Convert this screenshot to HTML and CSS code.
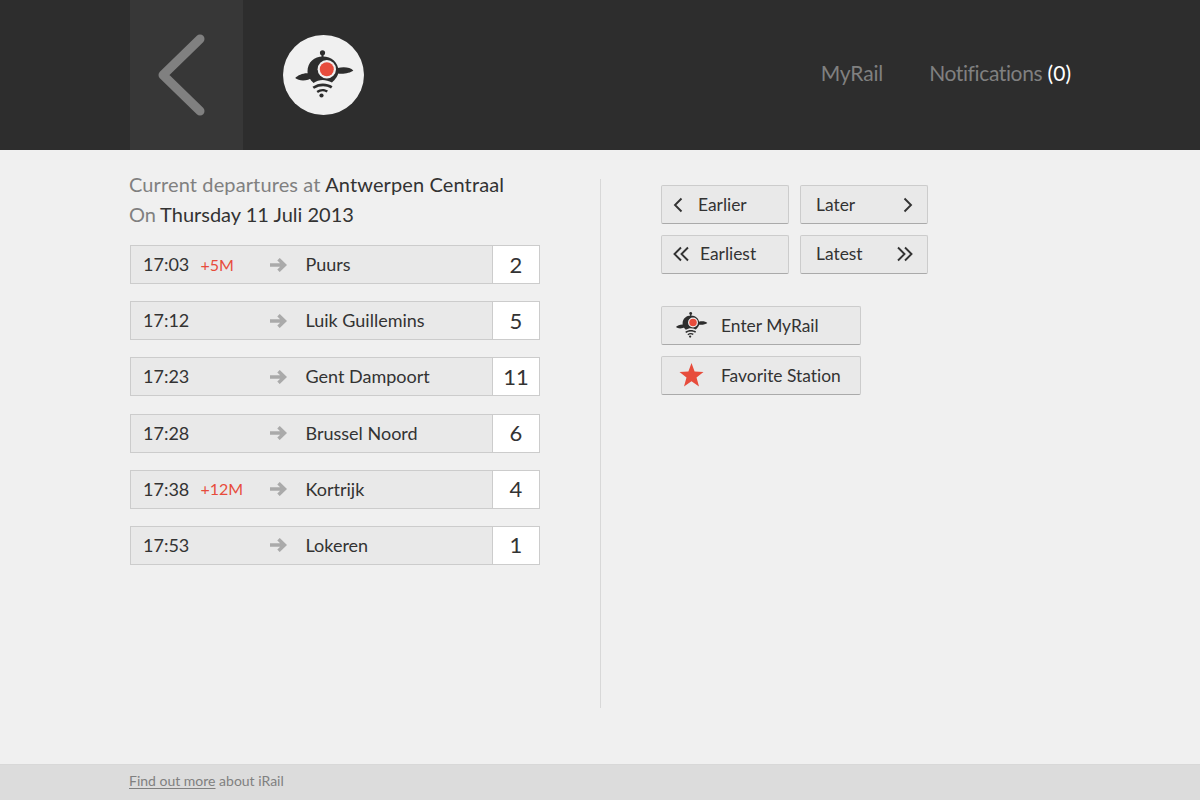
FILE: index.html
```html
<!DOCTYPE html>
<html lang="en">
<head>
    <meta charset="UTF-8">
    <title>iRail - Current departures</title>
    <link rel="stylesheet" href="styles.css">
</head>
<body>
    <svg class="defs" width="0" height="0">
        <symbol id="logo" viewBox="0 0 60 50">
            <g fill="#2d2d2d">
                <circle cx="28.500" cy="2.800" r="2.600"/>
                <rect x="27.500" y="4" width="2" height="5"/>
                <path d="M13.500 21.500C13.500 12 20.500 6.500 28.800 6.500C37.500 6.500 44.500 12.500 44.500 21C44.500 26 41 29.500 38 32.500C31.500 29 25 29 19.500 33C16.500 30 13.500 26.500 13.500 21.500z"/>
                <path d="M1.200 28c3-3 9-5.500 14-4.500l3 4c-4 3.500-13 4-17 .5z"/>
                <path d="M59.300 20.500c-3-3-9-4-15.500-2.500l-3 4.500c5 2.500 15 1 18.500-2z"/>
                <path d="M18.500 36.800c6-4.300 14-4.500 20-.5l-1.500 2.200c-5-3-11-3-17 .3z"/>
                <path d="M22.500 41c3.500-2.700 8-2.700 11.500-.5l-1.400 2c-3-1.600-5.800-1.600-8.700.4z"/>
                <circle cx="27.500" cy="45.500" r="2.100"/>
            </g>
            <circle cx="32.800" cy="19.300" r="9.200" fill="#f0f0f0"/>
            <circle cx="32.800" cy="19.300" r="7" fill="#e74c3c"/>
        </symbol>
    </svg>

    <header class="top">
        <div class="wrap top-inner">
            <a class="back" href="#">
                <svg width="48" height="82" viewBox="0 0 48 82"><path d="M43 5 L6 41 L43 77" fill="none" stroke="#808080" stroke-width="9" stroke-linecap="round" stroke-linejoin="round"/></svg>
            </a>
            <div class="badge">
                <svg width="60" height="50"><use href="#logo"/></svg>
            </div>
            <nav class="nav">
                <a class="myrail" href="#">MyRail</a>
                <a href="#"><span class="notif">Notifications</span> <span class="count">(0)</span></a>
            </nav>
        </div>
    </header>

    <main class="wrap content">
        <section class="left">
            <h1 class="title"><span class="line1">Current departures at <b>Antwerpen Centraal</b></span><br><span class="on">On </span><b>Thursday 11 Juli 2013</b></h1>
            <ul class="trains">
                <li class="train">
                    <div class="info"><span class="time">17:03</span><span class="delay">+5M</span>
                        <svg class="arrow" viewBox="0 0 17 14"><path d="M0 7h14M8.500 1.200 L14.500 7 L8.500 12.800" fill="none" stroke="#aaa" stroke-width="3.500"/></svg>
                        <span class="dest">Puurs</span></div>
                    <div class="platform">2</div>
                </li>
                <li class="train">
                    <div class="info"><span class="time">17:12</span><span class="delay"></span>
                        <svg class="arrow" viewBox="0 0 17 14"><path d="M0 7h14M8.500 1.200 L14.500 7 L8.500 12.800" fill="none" stroke="#aaa" stroke-width="3.500"/></svg>
                        <span class="dest">Luik Guillemins</span></div>
                    <div class="platform">5</div>
                </li>
                <li class="train">
                    <div class="info"><span class="time">17:23</span><span class="delay"></span>
                        <svg class="arrow" viewBox="0 0 17 14"><path d="M0 7h14M8.500 1.200 L14.500 7 L8.500 12.800" fill="none" stroke="#aaa" stroke-width="3.500"/></svg>
                        <span class="dest">Gent Dampoort</span></div>
                    <div class="platform">11</div>
                </li>
                <li class="train">
                    <div class="info"><span class="time">17:28</span><span class="delay"></span>
                        <svg class="arrow" viewBox="0 0 17 14"><path d="M0 7h14M8.500 1.200 L14.500 7 L8.500 12.800" fill="none" stroke="#aaa" stroke-width="3.500"/></svg>
                        <span class="dest">Brussel Noord</span></div>
                    <div class="platform">6</div>
                </li>
                <li class="train">
                    <div class="info"><span class="time">17:38</span><span class="delay">+12M</span>
                        <svg class="arrow" viewBox="0 0 17 14"><path d="M0 7h14M8.500 1.200 L14.500 7 L8.500 12.800" fill="none" stroke="#aaa" stroke-width="3.500"/></svg>
                        <span class="dest">Kortrijk</span></div>
                    <div class="platform">4</div>
                </li>
                <li class="train">
                    <div class="info"><span class="time">17:53</span><span class="delay"></span>
                        <svg class="arrow" viewBox="0 0 17 14"><path d="M0 7h14M8.500 1.200 L14.500 7 L8.500 12.800" fill="none" stroke="#aaa" stroke-width="3.500"/></svg>
                        <span class="dest">Lokeren</span></div>
                    <div class="platform">1</div>
                </li>
            </ul>
        </section>

        <section class="right">
            <div class="btn-grid">
                <a class="btn btn-l" href="#">
                    <svg class="chev" width="10" height="16" viewBox="0 0 10 16"><path d="M8.500 1.500 L2 8 L8.500 14.500" fill="none" stroke="#333" stroke-width="1.900"/></svg>
                    Earlier</a>
                <a class="btn btn-r" href="#">Later
                    <svg class="chev" width="10" height="16" viewBox="0 0 10 16"><path d="M1.500 1.500 L8 8 L1.500 14.500" fill="none" stroke="#333" stroke-width="1.900"/></svg></a>
                <a class="btn btn-l btn-far" href="#">
                    <svg class="chev" width="16" height="16" viewBox="0 0 16 16"><path d="M8 1.500 L1.500 8 L8 14.500M15 1.500 L8.500 8 L15 14.500" fill="none" stroke="#333" stroke-width="1.900"/></svg>
                    Earliest</a>
                <a class="btn btn-r btn-far" href="#">Latest
                    <svg class="chev" width="16" height="16" viewBox="0 0 16 16"><path d="M1 1.500 L7.500 8 L1 14.500M8 1.500 L14.500 8 L8 14.500" fill="none" stroke="#333" stroke-width="1.900"/></svg></a>
            </div>
            <div class="btn-list">
                <a class="btn btn-wide" href="#"><span class="btn-icon"><svg width="33" height="27"><use href="#logo"/></svg></span>Enter MyRail</a>
                <a class="btn btn-wide" href="#"><span class="btn-icon star-icon"><svg width="25" height="24" viewBox="0 0 25 24"><path d="M12.500 0 L15.600 8.600 L24.500 8.900 L17.500 14.500 L20 23.500 L12.500 18.300 L5 23.500 L7.500 14.500 L0.500 8.900 L9.400 8.600z" fill="#e74c3c"/></svg></span>Favorite Station</a>
            </div>
        </section>
    </main>

    <footer class="bottom">
        <div class="wrap"><a href="#">Find out more</a> about iRail</div>
    </footer>
</body>
</html>
```

FILE: styles.css
```css
* {
    box-sizing: border-box;
}
html, body {
    margin: 0;
    height: 100%;
}
body {
    background: #f0f0f0;
    color: #333;
    font-family: Lato, "Liberation Sans", sans-serif;
    font-variant-ligatures: none;
    display: flex;
    flex-direction: column;
    height: 800px;
    overflow: hidden;
}
a {
    color: inherit;
    text-decoration: none;
}
.defs {
    position: absolute;
}
.wrap {
    width: 1200px;
    padding-left: 130px;
}

/* header */
.top {
    background: #2d2d2d;
    height: 150px;
    flex: none;
}
.top-inner {
    display: flex;
    align-items: center;
    height: 150px;
}
.back {
    width: 113px;
    height: 150px;
    background: #373737;
    display: flex;
    align-items: center;
    padding-left: 27px;
}
.badge {
    width: 81px;
    height: 80px;
    margin-left: 40px;
    border-radius: 50%;
    background: #f0f0f0;
    display: flex;
    align-items: center;
    justify-content: center;
}
.nav {
    margin-left: auto;
    margin-right: 129px;
    margin-bottom: 5px;
    display: flex;
    gap: 46px;
    font-size: 21px;
    color: #808080;
}
.myrail {
    letter-spacing: -0.15px;
}
.notif {
    letter-spacing: -0.38px;
}
.count {
    color: #fff;
}

/* main */
.content {
    flex: 1;
    display: flex;
    padding-top: 29px;
}
.left {
    width: 471px;
    height: 529px;
    border-right: 1px solid #d8d8d8;
}
.title {
    margin: -10px 0 16px -1px;
    font-size: 20px;
    line-height: 30px;
    font-weight: 400;
    color: #808080;
}
.title b {
    font-weight: 400;
    color: #333;
}
.line1 {
    letter-spacing: 0.12px;
}
.on {
    word-spacing: -1px;
}
.trains {
    list-style: none;
    margin: 0;
    padding: 0;
    width: 410px;
    display: flex;
    flex-direction: column;
    gap: 17.2px;
}
.train {
    display: flex;
    height: 39px;
    border: 1px solid #ccc;
    font-size: 18px;
}
.info {
    flex: 1;
    display: flex;
    align-items: center;
    background: #e9e9e9;
    padding-left: 12px;
    padding-bottom: 1px;
}
.time {
    width: 57.5px;
}
.delay {
    width: 69.5px;
    color: #e74c3c;
    font-size: 16px;
}
.arrow {
    width: 17px;
    height: 14px;
    margin-right: 19px;
    margin-top: 1px;
}
.dest {
    margin-left: -0.5px;
}
.platform {
    width: 47px;
    background: #fff;
    border-left: 1px solid #ccc;
    padding-bottom: 1px;
    font-size: 22px;
    display: flex;
    align-items: center;
    justify-content: center;
}

/* buttons */
.right {
    padding: 6px 0 0 60px;
}
.btn {
    display: flex;
    align-items: center;
    height: 39px;
    padding-bottom: 1px;
    background: #e9e9e9;
    border: 1px solid #ccc;
    border-bottom-color: #aaa;
    border-radius: 2px;
    font-size: 17.4px;
}
.btn-grid {
    display: grid;
    grid-template-columns: 128px 128px;
    gap: 11px;
}
.btn-l {
    padding-left: 11px;
}
.btn-l .chev {
    margin-right: 15px;
}
.btn-l.btn-far .chev {
    margin-right: 11px;
}
.btn-r {
    padding-left: 15px;
    padding-right: 14px;
    justify-content: space-between;
}
.btn-far {
    padding-bottom: 3px;
}
.chev {
    margin-top: 1px;
}
.btn-far .chev {
    margin-top: 2px;
}
.btn-list {
    margin-top: 32px;
    display: flex;
    flex-direction: column;
    gap: 11px;
}
.btn-wide {
    width: 200px;
}
.btn-icon {
    width: 59px;
    padding-left: 13px;
    display: flex;
    align-items: center;
}
.star-icon {
    padding-left: 17px;
}

/* footer */
.bottom {
    flex: none;
    height: 36px;
    background: #dcdcdc;
    border-top: 1px solid #d8d8d8;
    color: #808080;
    font-size: 14px;
    line-height: 32px;
}
.bottom .wrap {
    padding-left: 129px;
}
.bottom a {
    text-decoration: underline;
    text-underline-offset: 2px;
}
```
